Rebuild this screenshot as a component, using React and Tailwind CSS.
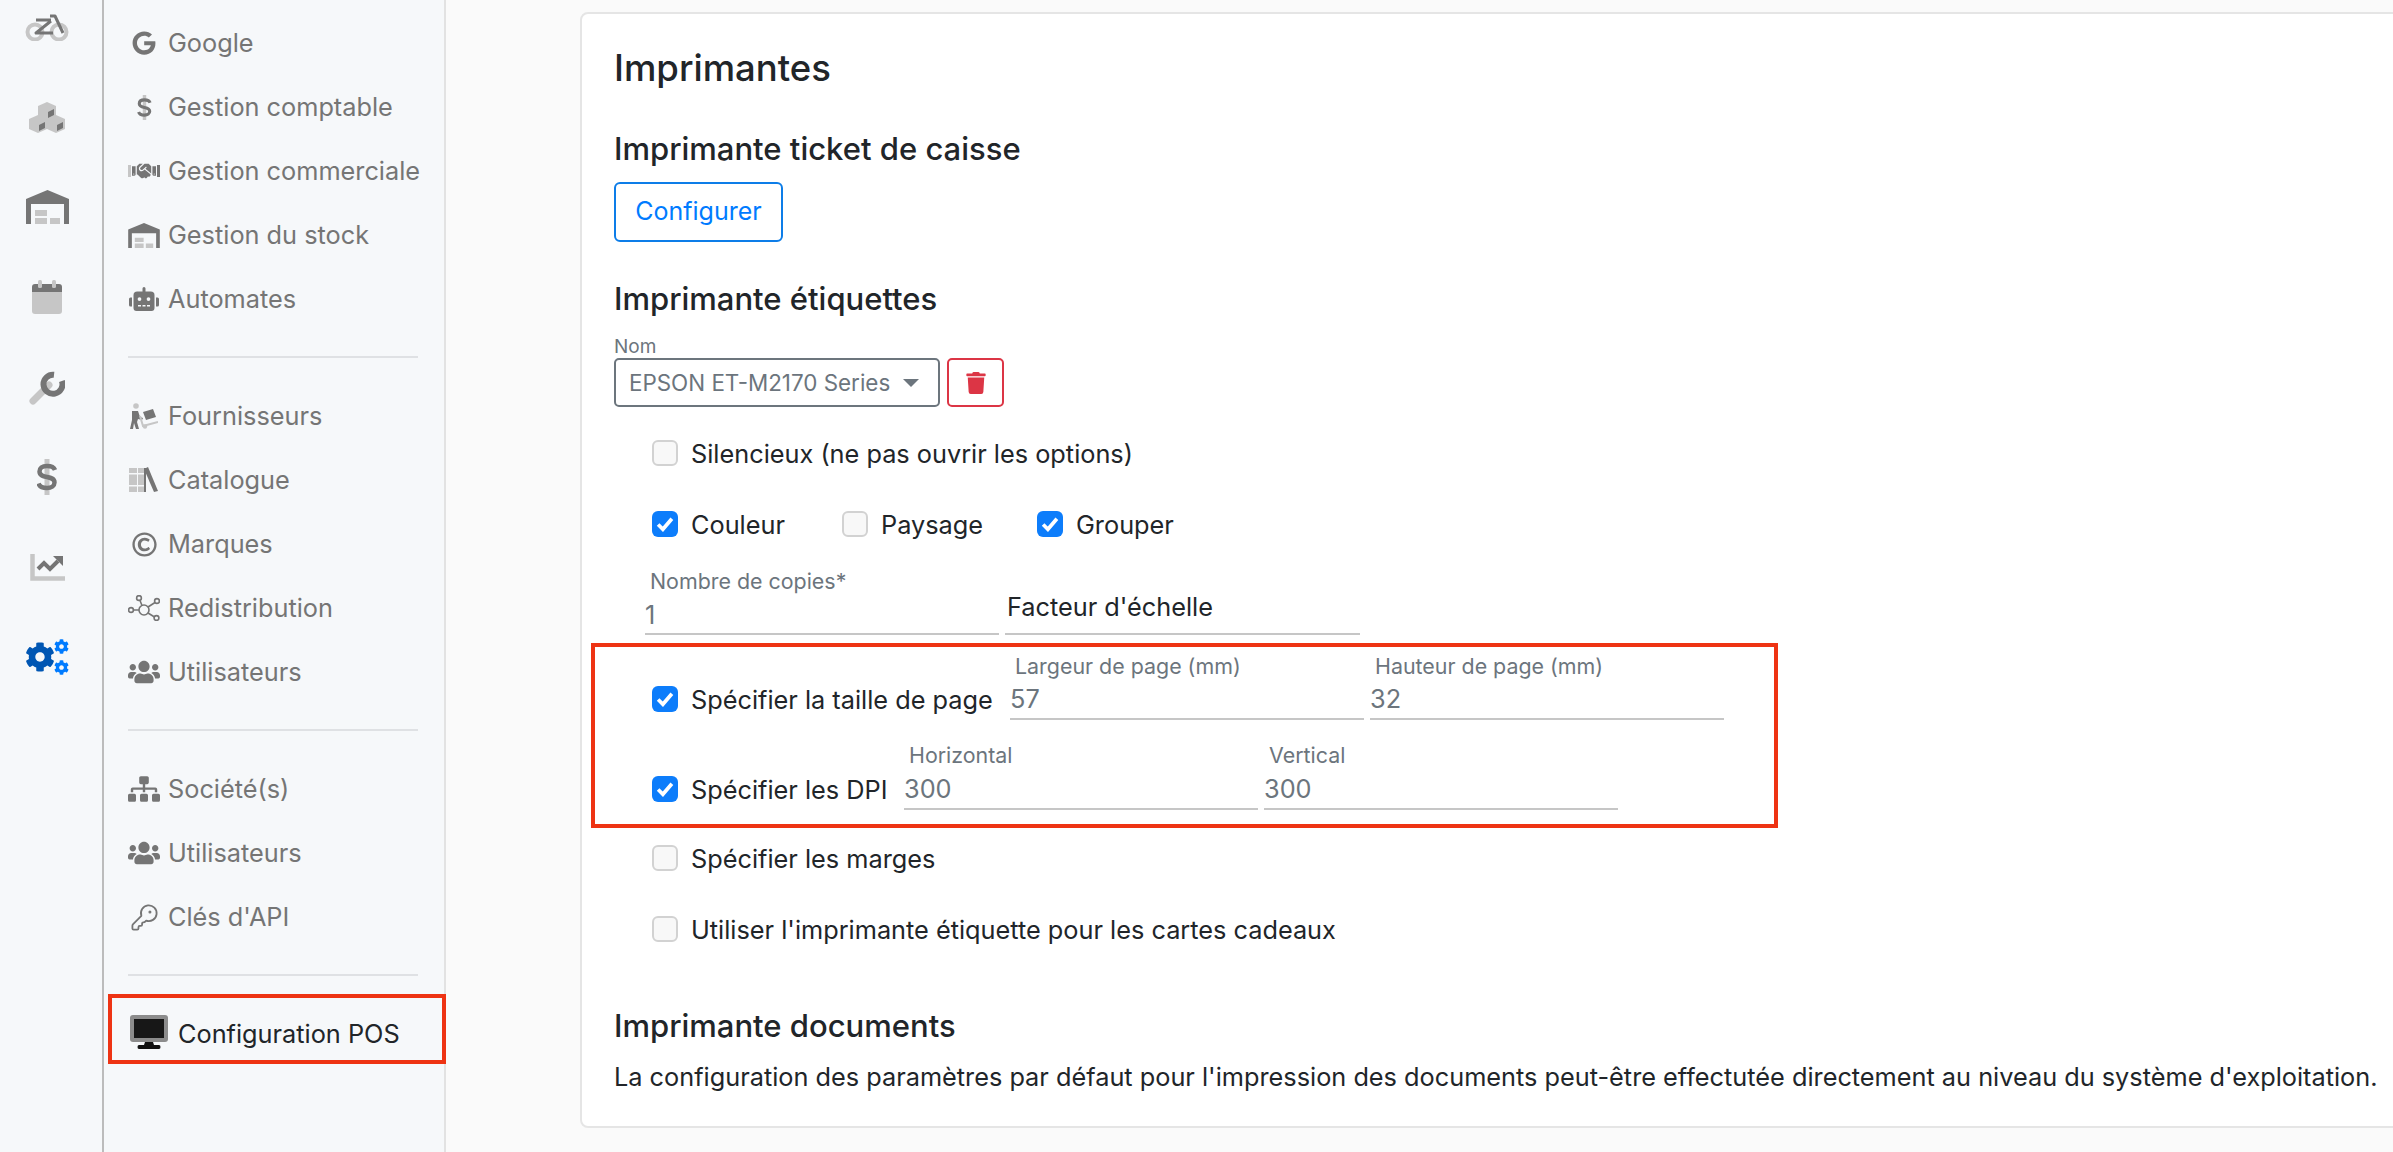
import React from "react";
import { FaCog, FaGoogle, FaHandshake, FaRobot, FaRegCopyright, FaUsers, FaSitemap, FaTrash } from "react-icons/fa";
import { KeyRound } from "lucide-react";

const DARK = "#757575";
const LIGHT = "#c6c6c6";

const Bike = () => (
  <svg width="44" height="27" viewBox="0 0 44 27" fill="none">
    <circle cx="10" cy="18" r="7.5" stroke={LIGHT} strokeWidth="4" />
    <circle cx="34" cy="18" r="7.5" stroke={LIGHT} strokeWidth="4" />
    <path d="M11 6h15M25 2h5l8 17M26 7 11 19h17" stroke={DARK} strokeWidth="3" strokeLinejoin="round" />
  </svg>
);

const Cube = ({ x, y }) => (
  <g transform={`translate(${x} ${y})`}>
    <path d="M9 0 18 4V14L9 18 0 14V4Z" fill={LIGHT} />
    <path d="M10 10 16 7V13L10 16Z" fill={DARK} />
  </g>
);

const Cubes = () => (
  <svg width="36" height="31" viewBox="0 0 36 31">
    <Cube x="9" y="0" />
    <Cube x="0" y="13" />
    <Cube x="18" y="13" />
  </svg>
);

const Warehouse = ({ w, h }) => (
  <svg width={w} height={h} viewBox="0 0 43 34">
    <path d="M0 34V9L21.5 0 43 9V34H38V14H5V34Z" fill={DARK} />
    <path d="M9 20H21V26H9ZM9 28H21V34H9ZM24 28H34V34H24Z" fill={LIGHT} />
  </svg>
);

const Calendar = () => (
  <svg width="30" height="34" viewBox="0 0 30 34">
    <path d="M0 12H30V31a3 3 0 0 1-3 3H3a3 3 0 0 1-3-3Z" fill={LIGHT} />
    <path d="M0 12V7a3 3 0 0 1 3-3H27a3 3 0 0 1 3 3V12Z" fill={DARK} />
    <rect x="6" y="0" width="4" height="8" rx="1.5" fill={LIGHT} />
    <rect x="20" y="0" width="4" height="8" rx="1.5" fill={LIGHT} />
  </svg>
);

const Wrench = () => (
  <svg width="36" height="36" viewBox="0 0 36 36" fill="none">
    <path d="M4 32 20 16" stroke={LIGHT} strokeWidth="7" strokeLinecap="round" />
    <path d="M31 6.500a9.500 9.500 0 1 1-10 0" stroke={DARK} strokeWidth="6" transform="rotate(38 24 12)" />
  </svg>
);

const Dollar = ({ w, h }) => (
  <svg width={w} height={h} viewBox="0 0 20 36" fill="none">
    <path d="M10 0V36" stroke={LIGHT} strokeWidth="5" strokeLinecap="round" />
    <path d="M18 11c-1-3-4-4-8-4-5 0-7.500 2.500-7.500 5.500 0 8 15 3 15 11 0 3-3 5.500-7.500 5.500-4 0-7.500-1.500-8.500-4.500" stroke={DARK} strokeWidth="4.500" />
  </svg>
);

const Chart = () => (
  <svg width="35" height="27" viewBox="0 0 35 27" fill="none">
    <path d="M2.500 0V24.500H35" stroke={LIGHT} strokeWidth="4.500" />
    <path d="M8 15 14 9l6 6 8-8" stroke={DARK} strokeWidth="4" />
    <path d="M23 2H33V12Z" fill={DARK} />
  </svg>
);

const Cogs = () => (
  <svg width="44" height="36" viewBox="0 0 44 36">
    <FaCog x="0" y="3" size={30} color="#0056b3" />
    <FaCog x="29" y="0" size={15} color="#007bff" />
    <FaCog x="29" y="21" size={15} color="#007bff" />
  </svg>
);

const Shake = () => (
  <div className="flex items-center gap-[1px]">
    <span className="w-[3px] h-[12px] bg-[#c6c6c6]" />
    <FaHandshake size={24} color={DARK} />
    <span className="w-[3px] h-[12px] bg-[#757575]" />
  </div>
);

const Supplier = () => (
  <svg width="28" height="26" viewBox="0 0 28 26">
    <circle cx="6" cy="3" r="2.800" fill={LIGHT} />
    <path d="M2 8h6l2 6 3 1-1 2-4-1-1 3 2 7H6l-2-6-1 6H0l2-9Z" fill={DARK} />
    <path d="M13 9 23 6l3 8-10 3Z" fill={DARK} />
    <path d="M10 13 13 23l15-4" stroke={LIGHT} strokeWidth="2" fill="none" />
    <circle cx="15" cy="23.500" r="2.200" fill={LIGHT} />
  </svg>
);

const Books = () => (
  <svg width="30" height="26" viewBox="0 0 30 26">
    <path d="M0 1H8V25H0ZM9 1H15V25H9Z" fill={LIGHT} />
    <path d="M0 6H15V7.500H0ZM0 18H15V19.500H0Z" fill="#f6f8fa" />
    <path d="M15 2 19 0 29 24 25 25Z" fill={DARK} />
    <path d="M15 1H17V25H15Z" fill={DARK} />
  </svg>
);

const Network = () => (
  <svg width="32" height="26" viewBox="0 0 32 26" fill="none" stroke={DARK} strokeWidth="1.600">
    <circle cx="16" cy="15" r="5" />
    <circle cx="11" cy="3" r="2.400" />
    <circle cx="29" cy="6" r="2.400" />
    <circle cx="3" cy="15" r="2.400" />
    <circle cx="28.500" cy="23" r="2.400" />
    <path d="M12 5.500 14 10.500M27 7.500 20 12M5.500 15H11M20 18 26.500 22" />
  </svg>
);

const Monitor = () => (
  <svg width="38" height="34" viewBox="0 0 38 34" className="mt-[5px]">
    <rect width="38" height="27" rx="3" fill="#8c8c8c" />
    <rect x="4" y="4" width="30" height="19" fill="#171717" />
    <path d="M15 27H23L24 30H29Q30.500 30 30.500 32T29 34H9Q7.500 34 7.500 32T9 30H14Z" fill="#111" />
  </svg>
);

const NAV_GROUPS = [
  [
    { label: "Google", icon: <FaGoogle size={24} color={DARK} /> },
    { label: "Gestion comptable", icon: <Dollar w={15} h={25} /> },
    { label: "Gestion commerciale", icon: <Shake /> },
    { label: "Gestion du stock", icon: <Warehouse w={32} h={25} /> },
    { label: "Automates", icon: <FaRobot size={30} color={DARK} /> },
  ],
  [
    { label: "Fournisseurs", icon: <Supplier /> },
    { label: "Catalogue", icon: <Books /> },
    { label: "Marques", icon: <FaRegCopyright size={25} color={DARK} /> },
    { label: "Redistribution", icon: <Network /> },
    { label: "Utilisateurs", icon: <FaUsers size={32} color={DARK} /> },
  ],
  [
    { label: "Société(s)", icon: <FaSitemap size={32} color={DARK} /> },
    { label: "Utilisateurs", icon: <FaUsers size={32} color={DARK} /> },
    { label: "Clés d'API", icon: <KeyRound size={29} color={DARK} strokeWidth={1.500} /> },
  ],
];

const RAIL = [<Bike />, <Cubes />, <Warehouse w={43} h={34} />, <Calendar />, <Wrench />, <Dollar w={20} h={36} />, <Chart />, <Cogs />];

function Check({ on }) {
  if (!on) {
    return <span className="w-[26px] h-[26px] shrink-0 rounded-[6px] border-2 border-[#d2d2d2] bg-[#f8f8f8]" />;
  }
  return (
    <span className="w-[26px] h-[26px] shrink-0 rounded-[6px] bg-[#0d7dfb] flex items-center justify-center">
      <svg width="18" height="16" viewBox="0 0 17 15" fill="none">
        <path d="M2 8l4.500 4.500L15 2.500" stroke="#fff" strokeWidth="3.500" />
      </svg>
    </span>
  );
}

function CheckRow({ label, on, className = "" }) {
  return (
    <div className={`flex items-center gap-[13px] h-[26px] ${className}`}>
      <Check on={on} />
      <span className="pt-[2px] text-[25.3px] text-[#212529] whitespace-nowrap">{label}</span>
    </div>
  );
}

function Field({ label, value, inputH = "h-[42px]", className = "" }) {
  return (
    <div className={`w-[354px] shrink-0 ${className}`}>
      <div className="h-[22px] leading-[22px] pl-[5px] text-[21.4px] text-[#6c757d] whitespace-nowrap">{label}</div>
      <div className={`${inputH} flex items-center text-[25.3px] text-[#6c757d] border-b-2 border-[#c6c6c6]`}>{value}</div>
    </div>
  );
}

export default function App() {
  return (
    <div className="h-[1152px] w-[2393px] flex overflow-hidden bg-[#fafafa] text-[#212529] font-['Inter',sans-serif]">
      <aside className="w-[104px] shrink-0 h-[1200px] bg-[#f6f8fa] border-r-2 border-[#bcbcbc] -mt-[18px] pr-[8px]">
        {RAIL.map((icon, i) => (
          <div key={i} className="h-[90px] flex items-center justify-center">
            {icon}
          </div>
        ))}
      </aside>

      <nav className="w-[342px] shrink-0 h-full bg-[#f6f8fa] border-r-2 border-[#e2e2e2] pt-[11px]">
        {NAV_GROUPS.map((group, i) => (
          <div key={i} className="mb-[26px]">
            {group.map((item) => (
              <div key={item.label} className="h-[64px] flex items-center pl-[24px] text-[25.3px] text-[#757575]">
                <span className="w-[32px] flex justify-center mr-[8px]">{item.icon}</span>
                <span>{item.label}</span>
              </div>
            ))}
            <div className="h-[2px] mt-[25px] ml-[24px] w-[290px] bg-[#dfe1e4]" />
          </div>
        ))}
        <div className="-mt-[8px] ml-[4px] w-[338px] h-[70px] border-4 border-[#ee3313] flex items-center pl-[18px] gap-[10px] text-[25.3px] text-[#212529]">
          <Monitor />
          <span className="pt-[10px]">Configuration POS</span>
        </div>
      </nav>

      <main className="flex-1 pl-[134px] pt-[12px]">
        <section className="w-[1900px] h-[1116px] bg-white border-2 border-[#e5e5e5] rounded-[8px] pl-[32px] pt-[32px]">
          <h1 className="text-[36.5px] leading-[44px] font-medium">Imprimantes</h1>

          <h2 className="mt-[41px] text-[31px] leading-[36px] font-medium">Imprimante ticket de caisse</h2>
          <button className="mt-[15px] w-[169px] h-[60px] rounded-[6px] border-2 border-[#0d7de8] text-[25px] text-[#007bff]">
            Configurer
          </button>

          <h2 className="mt-[39px] text-[31px] leading-[36px] font-medium">Imprimante étiquettes</h2>
          <div className="mt-[19px] h-[22px] leading-[22px] text-[19px] text-[#6c757d]">Nom</div>
          <div className="flex gap-[7px]">
            <div className="w-[326px] h-[49px] rounded-[5px] border-2 border-[#6c757d] flex items-center pl-[13px] text-[22.4px] text-[#6c757d]">
              EPSON ET-M2170 Series
              <span className="ml-[13px] w-0 h-0 border-x-[8px] border-x-transparent border-t-[8px] border-t-[#6c757d]" />
            </div>
            <div className="w-[57px] h-[49px] rounded-[5px] border-2 border-[#dc3545] flex items-center justify-center">
              <FaTrash size={22} color="#dc3545" />
            </div>
          </div>

          <CheckRow className="mt-[33px] ml-[38px]" label="Silencieux (ne pas ouvrir les options)" />
          <div className="mt-[45px] ml-[38px] flex">
            <CheckRow className="w-[190px]" label="Couleur" on />
            <CheckRow className="w-[195px]" label="Paysage" />
            <CheckRow label="Grouper" on />
          </div>

          <div className="mt-[33px] ml-[31px] flex gap-[6px]">
            <Field label="Nombre de copies*" value="1" inputH="h-[43px] pt-[5px]" />
            <div className="w-[355px] shrink-0 h-[65px] border-b-2 border-[#c6c6c6] flex items-center pt-[10px] pl-[2px] text-[25.3px]">
              Facteur d'échelle
            </div>
          </div>

          <div className="mt-[8px] -ml-[23px] w-[1187px] h-[185px] border-4 border-[#ee3313] pt-[8px] pl-[57px]">
            <div className="flex items-end">
              <CheckRow className="mb-[8px] w-[358px]" label="Spécifier la taille de page" on />
              <Field label="Largeur de page (mm)" value="57" inputH="h-[43px] pt-[3px]" />
              <Field className="ml-[6px]" label="Hauteur de page (mm)" value="32" inputH="h-[43px] pt-[3px]" />
            </div>
            <div className="mt-[24px] flex items-end">
              <CheckRow className="mb-[8px] w-[252px]" label="Spécifier les DPI" on />
              <Field label="Horizontal" value="300" inputH="h-[44px] pt-[3px]" />
              <Field className="ml-[6px]" label="Vertical" value="300" inputH="h-[44px] pt-[3px]" />
            </div>
          </div>

          <CheckRow className="mt-[17px] ml-[38px]" label="Spécifier les marges" />
          <CheckRow className="mt-[45px] ml-[38px]" label="Utiliser l'imprimante étiquette pour les cartes cadeaux" />

          <h2 className="mt-[66px] text-[31px] leading-[36px] font-medium">Imprimante documents</h2>
          <p className="mt-[15px] text-[25.3px] leading-[36px] whitespace-nowrap">
            La configuration des paramètres par défaut pour l'impression des documents peut-être effectutée directement au niveau du système d'exploitation.
          </p>
        </section>
      </main>
    </div>
  );
}
